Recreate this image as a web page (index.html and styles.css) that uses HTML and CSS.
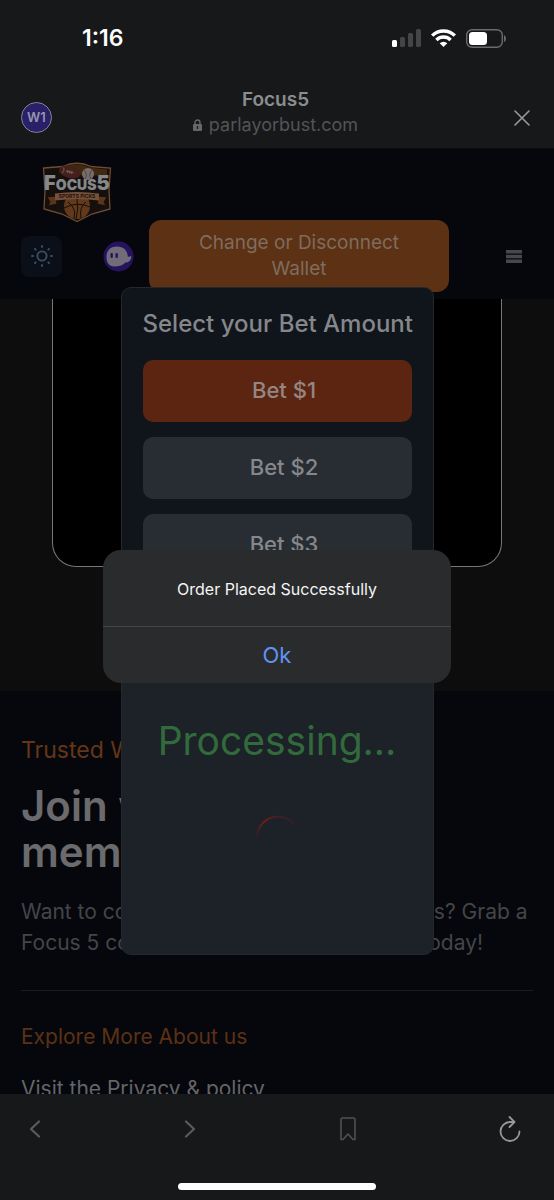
FILE: index.html
```html
<!DOCTYPE html>
<html lang="en">
  <head>
    <meta charset="UTF-8" />
    <meta name="viewport" content="width=device-width, initial-scale=1.0" />
    <title>Focus5</title>
    <link rel="stylesheet" href="styles.css">
  </head>
  <body>
    <header class="browser">
      <div class="status">
        <span class="time">1:16</span>
        <div class="status-icons">
          <svg width="29" height="18" viewBox="0 0 29 18">
            <rect x="0" y="11" width="5" height="7" rx="1.5" fill="#fff" />
            <rect x="8" y="8" width="5" height="10" rx="1.5" fill="#444547" />
            <rect x="16" y="4" width="5" height="14" rx="1.5" fill="#444547" />
            <rect x="24" y="0" width="5" height="18" rx="1.5" fill="#444547" />
          </svg>
          <svg width="25" height="18" viewBox="0 0 25 18" fill="none" stroke="#fff" stroke-width="3.4">
            <path d="M1.2 6.6a16 16 0 0 1 22.6 0" />
            <path d="M5.4 11a10 10 0 0 1 14.2 0" />
            <path d="M12.5 18l-3.8-3.8a5.4 5.4 0 0 1 7.6 0z" fill="#fff" stroke="none" />
          </svg>
          <svg width="40" height="19" viewBox="0 0 40 19">
            <rect x=".7" y=".7" width="35.6" height="17.6" rx="5.5" fill="none" stroke="#6b6b6d" stroke-width="1.4" />
            <rect x="3" y="3" width="18" height="13" rx="3.5" fill="#fff" />
            <path d="M38 6v7q2-1 2-3.500t-2-3.500z" fill="#6b6b6d" />
          </svg>
        </div>
      </div>
      <div class="address">
        <button class="avatar">W1</button>
        <div class="site">
          <b>Focus5</b>
          <span class="url">
            <svg width="9" height="12" viewBox="0 0 9 12">
              <path d="M2 6V3.500a2.500 2.500 0 0 1 5 0V6" fill="none" stroke="#66676a" stroke-width="1.400" />
              <rect y="5" width="9" height="7" rx="1" fill="#66676a" />
              <path d="M4.500 7v3" stroke="#17181a" stroke-width="1.200" />
            </svg>
            parlayorbust.com
          </span>
        </div>
        <button class="close" aria-label="Close">
          <svg width="16" height="16" viewBox="0 0 16 16" fill="none" stroke="#98999b" stroke-width="1.6" stroke-linecap="round">
            <path d="M1 1l14 14M15 1L1 15" />
          </svg>
        </button>
      </div>
    </header>

    <main class="page">
      <nav class="navbar">
        <a class="logo" href="#" aria-label="Focus5 Sports Picks">
          <svg width="70" height="60" viewBox="0 0 70 60">
            <path d="M1.500 6L21 4.500Q35-2 49 4.500L68.500 6 67 28l1 19-18 5-15 7.500L20 52 2 47l1-19z" fill="#15100d" stroke="#6e4c31" stroke-width="1.300" />
            <path d="M22 5.500q13-6 26 0l17 2v6H40z" fill="#40290f" />
            <g transform="rotate(14 28 9)">
              <ellipse cx="28" cy="10" rx="11" ry="6" fill="#45201a" />
              <path d="M21 7q2 3 0 6M24 10h8M26 8.500v3M28 8.500v3M30 8.500v3" fill="none" stroke="#776760" stroke-width=".8" />
            </g>
            <circle cx="46" cy="12" r="6" fill="#74706e" />
            <path d="M42 8q4 4 1 9M50 8q-4 4-1 9" fill="none" stroke="#542524" stroke-width=".7" />
            <circle cx="35" cy="44" r="13" fill="#63391c" />
            <path d="M35 37q2 10-1 20M22 46q13-7 26-1M26 40q9 7 6 16M44 40q-7 5-5 16" fill="none" stroke="#160e0a" />
            <path d="M5 35l8-1 2 8-9 2 2-4zM65 35l-8-1-2 8 9 2-2-4z" fill="#5c351a" stroke="#15100d" />
            <path d="M13 31.500q22-3 44 0v7q-22-3-44 0z" fill="#76513a" />
            <text x="35" y="36" class="logo-sub">SPORTS PICKS</text>
            <text x="35" y="28" class="logo-text"><tspan class="logo-big">F</tspan>OCUS<tspan class="logo-big">5</tspan></text>
          </svg>
        </a>
        <div class="nav-row">
          <button class="theme" aria-label="Toggle theme">
            <svg width="22" height="22" viewBox="0 0 22 22" fill="none" stroke="#3c4d66" stroke-width="1.900" stroke-linecap="round">
              <circle cx="11" cy="11" r="4.600" />
              <path d="M11 1v1M11 20v1M1 11h1M20 11h1M4 4l.7.7M17.300 17.300l.7.7M4 18l.7-.7M17.300 4.700L18 4" />
            </svg>
          </button>
          <svg class="wallet-icon" width="31" height="31" viewBox="0 0 31 31">
            <circle cx="15.500" cy="15.500" r="15" fill="#25135e" />
            <path d="M3.500 16C3.500 9 8 5.500 14 5.500c6.500 0 10.500 4 10.800 10q1.500.5 3.400-.5c.6 4-2.500 6.500-5.700 6.500-3 3-7 4-11 4-5.500 0-8-4-8-9.500z" fill="#706c7a" />
            <rect x="7.500" y="12" width="2.400" height="5" rx="1.200" fill="#25135e" />
            <rect x="12.500" y="12" width="2.400" height="5" rx="1.200" fill="#25135e" />
          </svg>
          <button class="wallet">Change or Disconnect Wallet</button>
          <button class="menu" aria-label="Menu">
            <svg width="16" height="13" viewBox="0 0 16 13" fill="#47484b">
              <path d="M0 0h16v3.500H0zM0 4.700h16v3.600H0zM0 9.500h16V13H0z" />
            </svg>
          </button>
        </div>
      </nav>

      <section class="stage">
        <div class="screen"></div>
      </section>

      <section class="join">
        <p class="tagline">Trusted Wins</p>
        <h1>Join with our<br />members</h1>
        <p class="text">Want to connect with the best sports clubs? Grab a<br />Focus 5 collectibles and join our groups today!</p>
        <hr />
        <h2>Explore More About us</h2>
        <a class="policy" href="#">Visit the Privacy &amp; policy</a>
      </section>

      <div class="overlay">
        <div class="bet">
          <h3>Select your Bet Amount</h3>
          <button class="bet-btn active">Bet $1</button>
          <button class="bet-btn">Bet $2</button>
          <button class="bet-btn">Bet $3</button>
          <div class="processing">
            <p>Processing...</p>
            <svg width="44" height="44" viewBox="0 0 44 44" fill="none">
              <defs>
                <linearGradient id="fade" x1="0" y1="1" x2="1" y2="0">
                  <stop offset="0" stop-color="#761b1b" stop-opacity="0" />
                  <stop offset=".5" stop-color="#761b1b" />
                  <stop offset="1" stop-color="#761b1b" stop-opacity="0" />
                </linearGradient>
              </defs>
              <path d="M2 24A21 21 0 0 1 39 9" stroke="url(#fade)" stroke-width="2" />
            </svg>
          </div>
        </div>
      </div>

      <div class="overlay">
        <div class="alert" role="alertdialog" aria-labelledby="message">
          <p id="message">Order Placed Successfully</p>
          <button>Ok</button>
        </div>
      </div>
    </main>

    <footer class="toolbar">
      <div class="tools">
        <button aria-label="Back">
          <svg width="12" height="18" viewBox="0 0 12 18" fill="none" stroke="#5a5b5d" stroke-width="2.200" stroke-linecap="round" stroke-linejoin="round">
            <path d="M10 1.500L2 9l8 7.500" />
          </svg>
        </button>
        <button aria-label="Forward">
          <svg width="12" height="18" viewBox="0 0 12 18" fill="none" stroke="#5a5b5d" stroke-width="2.200" stroke-linecap="round" stroke-linejoin="round">
            <path d="M2 1.500L10 9l-8 7.500" />
          </svg>
        </button>
        <button aria-label="Bookmark">
          <svg width="16" height="24" viewBox="0 0 16 24" fill="none" stroke="#505153" stroke-width="1.600" stroke-linejoin="round">
            <path d="M1 3q0-2 2-2h10q2 0 2 2v19.500h-2L8 17l-5 5.500H1z" />
          </svg>
        </button>
        <button aria-label="Reload">
          <svg width="22" height="26" viewBox="0 0 22 26" fill="none" stroke="#96979a" stroke-width="1.800" stroke-linecap="round" stroke-linejoin="round">
            <path d="M14.500 6H11A9.500 9.500 0 1 0 20.500 15.500M10.500 1l5 5-5 5" />
          </svg>
        </button>
      </div>
      <div class="home-bar"></div>
    </footer>
  </body>
</html>
```

FILE: styles.css
```css
* {
  padding: 0;
  margin: 0;
  box-sizing: border-box;
}
body {
  font-family: Inter, "Liberation Sans", sans-serif;
  background: #17181a;
  height: 100vh;
  display: flex;
  flex-direction: column;
}
button {
  font-family: inherit;
  border: none;
  background: none;
}
svg {
  display: block;
}

/* top bar */
.browser {
  height: 149px;
  flex-shrink: 0;
  border-bottom: 1px solid #0d0d10;
}
.status {
  display: flex;
  justify-content: space-between;
  align-items: center;
  padding: 24px 48px 0 82px;
}
.time {
  color: #fff;
  font-size: 23px;
  font-weight: 600;
  line-height: 28px;
}
.status-icons {
  display: flex;
  align-items: center;
  gap: 10px;
}
.address {
  display: grid;
  grid-template-columns: 1fr auto 1fr;
  align-items: center;
  padding: 35px 24px 0 21px;
}
.avatar {
  width: 31px;
  height: 31px;
  margin-top: 10px;
  border: 1px solid #858493;
  border-radius: 50%;
  background: #292069;
  color: #9794ad;
  font-size: 13px;
  font-weight: 600;
}
.site {
  display: flex;
  flex-direction: column;
  align-items: center;
  color: #8c8d8f;
  font-size: 19px;
  line-height: 26px;
}
.site b {
  font-weight: 600;
}
.url {
  display: flex;
  align-items: center;
  gap: 7px;
  color: #535456;
  font-size: 18px;
  line-height: 24px;
}
.close {
  margin-top: 12px;
  justify-self: end;
}

/* navbar */
.page {
  position: relative;
  flex: 1;
  min-height: 0;
  overflow: hidden;
  background: #06070c;
}
.navbar {
  padding: 13px 32px 7px 21px;
}
.logo {
  display: block;
  height: 58px;
  padding-left: 21px;
}
.logo-text {
  font-size: 14px;
  font-weight: 900;
  text-anchor: middle;
  fill: #85898c;
}
.logo-big {
  font-size: 20px;
}
.logo-sub {
  font-size: 5px;
  font-weight: 700;
  text-anchor: middle;
  fill: #1b100a;
}
.nav-row {
  display: flex;
  align-items: center;
}
.theme {
  width: 41px;
  height: 41px;
  display: grid;
  place-items: center;
  border-radius: 8px;
  background: #0a0f18;
}
.wallet-icon {
  margin: 0 15px 0 41px;
}
.wallet {
  width: 300px;
  height: 72px;
  padding: 0 40px;
  border-radius: 12px;
  background: #5c3114;
  color: #7f6c5e;
  font-size: 19px;
  line-height: 26px;
}
.menu {
  margin-left: auto;
}

/* content behind the modal */
.stage {
  height: 392px;
  padding: 0 52px;
  background: #0d0d0d;
}
.screen {
  height: 268px;
  border: 1px solid #77777a;
  border-top: none;
  border-radius: 0 0 24px 24px;
  background: #000;
}
.join {
  padding: 42px 21px;
}
.tagline {
  color: #643617;
  font-size: 23px;
  line-height: 34px;
}
.join h1 {
  margin-top: 16px;
  color: #6b6b6d;
  font-size: 42px;
  font-weight: 600;
  line-height: 46px;
}
.text {
  margin-top: 21px;
  color: #444548;
  font-size: 21px;
  line-height: 31px;
}
.join hr {
  margin-top: 32px;
  border: none;
  border-top: 1px solid #1c1d22;
}
.join h2 {
  margin-top: 30px;
  color: #5c3114;
  font-size: 21px;
  font-weight: 400;
  line-height: 32px;
}
.policy {
  display: block;
  margin-top: 20px;
  color: #646568;
  font-size: 21px;
  line-height: 31px;
  text-decoration: none;
}

/* bet modal */
.overlay {
  position: absolute;
  inset: 0;
  display: flex;
  justify-content: center;
  align-items: center;
}
.bet {
  width: 313px;
  height: 668px;
  margin-bottom: 2px;
  padding: 20px 21px;
  display: flex;
  flex-direction: column;
  gap: 15px;
  border: 1px solid #24282d;
  border-radius: 10px;
  background: linear-gradient(#10151b 0, #10151b 300px, #1d2128 390px);
}
.bet h3 {
  margin-bottom: 5px;
  color: #85878b;
  font-size: 24px;
  font-weight: 500;
  line-height: 32px;
  text-align: center;
  white-space: nowrap;
}
.bet-btn {
  flex-shrink: 0;
  height: 62px;
  padding: 0 0 2px 14px;
  border-radius: 10px;
  background: #282c33;
  color: #85878b;
  font-size: 22px;
  font-weight: 500;
}
.bet-btn.active {
  background: #5c2512;
  color: #958682;
}
.processing {
  margin-top: 120px;
  display: flex;
  flex-direction: column;
  align-items: center;
  gap: 44px;
  color: #316b3c;
  font-size: 39px;
  line-height: 60px;
}

/* alert */
.alert {
  width: 348px;
  margin-bottom: 10px;
  border-radius: 18px;
  background: #2a2b2d;
  text-align: center;
}
.alert p {
  padding: 27px 16px 25px;
  border-bottom: 1px solid #434446;
  color: #f5f5f5;
  font-size: 16px;
  line-height: 24px;
}
.alert button {
  width: 100%;
  height: 56px;
  color: #5e93f5;
  font-size: 22px;
}

/* bottom bar */
.toolbar {
  height: 106px;
  flex-shrink: 0;
  padding-top: 22px;
}
.tools {
  display: flex;
  justify-content: space-between;
  align-items: center;
  padding: 0 33px 0 29px;
}
.home-bar {
  width: 198px;
  height: 7px;
  margin: 41px auto 0;
  border-radius: 4px;
  background: #fff;
}
```
